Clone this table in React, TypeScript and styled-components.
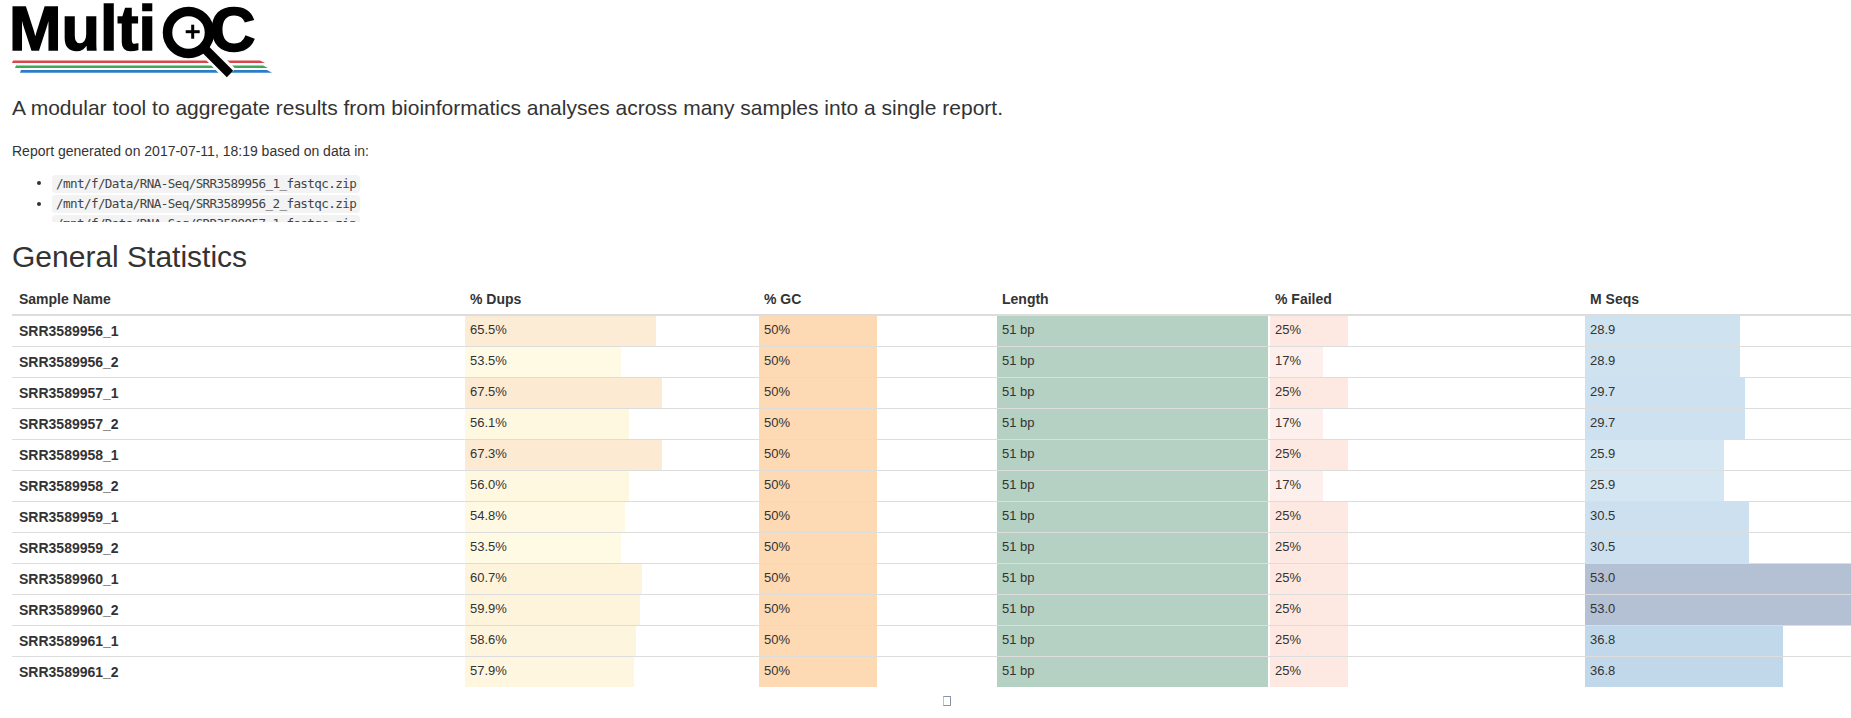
import styled, { createGlobalStyle } from "styled-components";

const GlobalStyle = createGlobalStyle`
    html, body {
        margin: 0;
        padding: 0;
        overflow: hidden;
        background: #fff;
    }
    body {
        font-family: "Liberation Sans", Arial, sans-serif;
        font-size: 14px;
        line-height: 1.42857;
        color: #333;
    }
`;

const Page = styled.div`
    padding: 0 12px;
`;

const LogoBox = styled.div`
    height: 80px;
`;

const LogoSvg = styled.svg`
    display: block;
    overflow: visible;
`;

const Lead = styled.p`
    font-size: 21px;
    line-height: 1.4;
    margin: 13px 0 20px 0;
`;

const Meta = styled.p`
    margin: 0 0 10px 0;
`;

const PathList = styled.ul`
    margin: 0;
    padding-left: 40px;
    max-height: 50px;
    overflow: hidden;
    line-height: 20px;
`;

const Code = styled.code`
    display: inline-block;
    font-family: "DejaVu Sans Mono", monospace;
    font-size: 12.6px;
    letter-spacing: -0.6px;
    line-height: 14px;
    padding: 2px 4px;
    color: #444;
    background-color: #f3f3f3;
    border-radius: 4px;
    vertical-align: middle;
`;

const SectionTitle = styled.h2`
    font-size: 30px;
    font-weight: 400;
    line-height: 1.1;
    margin: 18px 0 11px 0;
`;

const Table = styled.table`
    width: 1860px;
    border-collapse: collapse;
    table-layout: fixed;
`;

const HeadCell = styled.th<{$first?: boolean}>`
    text-align: left;
    font-weight: 700;
    line-height: 20px;
    padding: 5px 5px 5px ${props => props.$first ? '7px' : '5px'};
    border-bottom: 2px solid #ddd;
    white-space: nowrap;
`;

const NameCell = styled.td`
    font-weight: 700;
    line-height: 20px;
    padding: 5px 7px;
    border-top: 1px solid #ddd;
    white-space: nowrap;
`;

const DataCell = styled.td`
    padding: 0;
    border-top: 1px solid #ddd;
    vertical-align: top;
`;

const Wrapper = styled.div`
    position: relative;
    height: 30px;
    margin-right: 2px;
`;

const Bar = styled.span<{$color: string}>`
    position: absolute;
    top: 0;
    bottom: 0;
    left: 0;
    background-color: ${props => props.$color};
`;

const Value = styled.span`
    position: relative;
    display: block;
    padding: 4px 5px 2px 5px;
    font-size: 13px;
    line-height: 20px;
    white-space: nowrap;
`;

const Expand = styled.div`
    text-align: center;
    padding: 9px 0 0 5px;
    width: 1860px;
    line-height: 10px;
`;

const Tofu = styled.span`
    display: inline-block;
    width: 6px;
    height: 8px;
    border: 1px solid #8995a5;
    border-left-color: #a9c7e4;
`;

type Stop = [number, [number, number, number]];

function scale(stops: Stop[], v: number) {
    if (v <= stops[0][0]) return rgb(stops[0][1]);
    for (let i = 1; i < stops.length; i++) {
        const [x1, c1] = stops[i];
        const [x0, c0] = stops[i - 1];
        if (v <= x1) {
            const t = (v - x0) / (x1 - x0);
            return rgb([0, 1, 2].map(k => c0[k] + (c1[k] - c0[k]) * t) as [number, number, number]);
        }
    }
    return rgb(stops[stops.length - 1][1]);
}

function rgb(c: [number, number, number]) {
    return `rgb(${Math.round(c[0])}, ${Math.round(c[1])}, ${Math.round(c[2])})`;
}

const dupsStops: Stop[] = [[50, [255, 253, 233]], [60, [254, 244, 220]], [70, [253, 230, 208]]];
const failStops: Stop[] = [[15, [253, 242, 238]], [25, [253, 233, 226]]];
const seqStops: Stop[] = [[25, [213, 231, 242]], [29, [206, 226, 240]], [37, [193, 216, 235]], [53, [180, 192, 211]]];

const rows: [string, number, number, number, number, number][] = [
    ['SRR3589956_1', 65.5, 50, 51, 25, 28.9],
    ['SRR3589956_2', 53.5, 50, 51, 17, 28.9],
    ['SRR3589957_1', 67.5, 50, 51, 25, 29.7],
    ['SRR3589957_2', 56.1, 50, 51, 17, 29.7],
    ['SRR3589958_1', 67.3, 50, 51, 25, 25.9],
    ['SRR3589958_2', 56.0, 50, 51, 17, 25.9],
    ['SRR3589959_1', 54.8, 50, 51, 25, 30.5],
    ['SRR3589959_2', 53.5, 50, 51, 25, 30.5],
    ['SRR3589960_1', 60.7, 50, 51, 25, 53.0],
    ['SRR3589960_2', 59.9, 50, 51, 25, 53.0],
    ['SRR3589961_1', 58.6, 50, 51, 25, 36.8],
    ['SRR3589961_2', 57.9, 50, 51, 25, 36.8],
];

const paths = [
    '/mnt/f/Data/RNA-Seq/SRR3589956_1_fastqc.zip',
    '/mnt/f/Data/RNA-Seq/SRR3589956_2_fastqc.zip',
    '/mnt/f/Data/RNA-Seq/SRR3589957_1_fastqc.zip',
    '/mnt/f/Data/RNA-Seq/SRR3589957_2_fastqc.zip',
];

function Cell({pct, color, text}: {pct: number, color: string, text: string}) {
    return (
        <DataCell>
            <Wrapper>
                <Bar $color={color} style={{width: `${pct}%`}} />
                <Value>{text}</Value>
            </Wrapper>
        </DataCell>
    );
}

function Logo() {
    return (
        <LogoSvg width="280" height="80" viewBox="0 0 280 80">
            <text x="-3" y="50" fontFamily="'Liberation Sans', Arial, sans-serif" fontWeight="700" fontSize="63" fill="#000" stroke="#000" strokeWidth="1.5">Multi</text>
            <text x="198" y="51" fontFamily="'Liberation Sans', Arial, sans-serif" fontWeight="700" fontSize="63" fill="#000" stroke="#000" strokeWidth="1.5">C</text>
            <polygon points="1,60.5 248,60.5 253,63 0,63" fill="#d9474e" />
            <polygon points="4,65.5 251,65.5 256,68 3,68" fill="#3ea852" />
            <polygon points="9,70 255,70 260,72.8 8,72.8" fill="#2c7dc8" />
            <line x1="193" y1="48" x2="218" y2="74" stroke="#fff" strokeWidth="15" />
            <circle cx="176.5" cy="32.5" r="21" fill="#fff" stroke="#000" strokeWidth="9.5" />
            <line x1="193" y1="49" x2="218" y2="74" stroke="#000" strokeWidth="9" />
            <rect x="173.7" y="30.2" width="14" height="3" fill="#000" />
            <rect x="179.2" y="24.7" width="3" height="14" fill="#000" />
        </LogoSvg>
    );
}

export default function App() {
    return (
        <Page>
            <GlobalStyle />
            <LogoBox>
                <Logo />
            </LogoBox>
            <Lead>A modular tool to aggregate results from bioinformatics analyses across many samples into a single report.</Lead>
            <Meta>Report generated on 2017-07-11, 18:19 based on data in:</Meta>
            <PathList>
                {paths.map(p => (
                    <li key={p}><Code>{p}</Code></li>
                ))}
            </PathList>
            <SectionTitle>General Statistics</SectionTitle>
            <Table>
                <colgroup>
                    <col style={{width: '453px'}} />
                    <col style={{width: '294px'}} />
                    <col style={{width: '238px'}} />
                    <col style={{width: '273px'}} />
                    <col style={{width: '315px'}} />
                    <col style={{width: '287px'}} />
                </colgroup>
                <thead>
                    <tr>
                        <HeadCell $first>Sample Name</HeadCell>
                        <HeadCell>% Dups</HeadCell>
                        <HeadCell>% GC</HeadCell>
                        <HeadCell>Length</HeadCell>
                        <HeadCell>% Failed</HeadCell>
                        <HeadCell>M Seqs</HeadCell>
                    </tr>
                </thead>
                <tbody>
                    {rows.map(([name, dups, gc, len, failed, seqs]) => (
                        <tr key={name}>
                            <NameCell>{name}</NameCell>
                            <Cell pct={dups} color={scale(dupsStops, dups)} text={`${dups.toFixed(1)}%`} />
                            <Cell pct={gc} color="#fdd9b4" text={`${gc}%`} />
                            <Cell pct={len / 51 * 100} color="#b4d1c3" text={`${len} bp`} />
                            <Cell pct={failed} color={scale(failStops, failed)} text={`${failed}%`} />
                            <Cell pct={seqs / 53 * 100} color={scale(seqStops, seqs)} text={seqs.toFixed(1)} />
                        </tr>
                    ))}
                </tbody>
            </Table>
            <Expand>
                <Tofu />
            </Expand>
        </Page>
    );
}
